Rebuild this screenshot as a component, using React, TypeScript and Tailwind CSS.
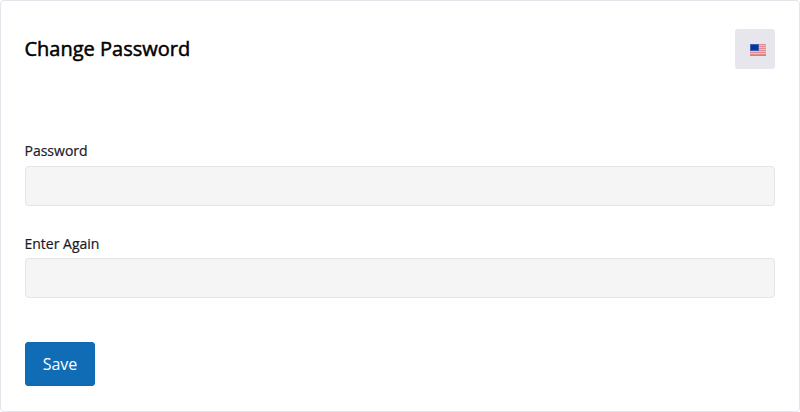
import { ButtonHTMLAttributes, InputHTMLAttributes } from 'react'

interface PasswordFieldProps extends InputHTMLAttributes<HTMLInputElement> {
  id: string
  label: string
}

const PasswordField = ({ id, label, ...props }: PasswordFieldProps) => (
  <div className="flex flex-col">
    <label htmlFor={id} className="-ml-[0.5px] pb-[4.6px] text-[14px] leading-[21px] text-[#1b1b28] [-webkit-text-stroke:0.22px_#1b1b28]">
      {label}
    </label>
    <input
      id={id}
      type="password"
      className="h-10 w-full rounded-[4px] border border-[#e4e4ea] bg-[#f5f5f5] px-3 text-sm outline-none"
      {...props}
    />
  </div>
)

const UsFlag = () => (
  <svg width="16" height="12" viewBox="0 0 16 12" shapeRendering="crispEdges">
    <rect width="16" height="12" fill="#f1bcbf" />
    {[0, 2, 4, 6, 8, 10].map((y) => (
      <rect key={y} y={y} width="16" height="1" fill="#e38b8f" />
    ))}
    <rect y="11" width="16" height="1" fill="#d87c80" />
    <rect width="9" height="7" fill="#3f60ae" />
    <rect x="1" y="1" width="7" height="5" fill="#0038a0" />
  </svg>
)

const LanguageButton = (props: ButtonHTMLAttributes<HTMLButtonElement>) => (
  <button
    type="button"
    className="flex size-10 items-center justify-center rounded-[3px] bg-[#e8e6ed] pt-0.5 pl-[6px]"
    {...props}
  >
    <UsFlag />
  </button>
)

export default function App() {
  return (
    <main className="h-[412px] w-full rounded-[4px] border border-[#e4e4ea] bg-white px-6 pt-7 font-['Open_Sans',sans-serif]">
      <header className="flex h-10 items-center justify-between">
        <h1 className="-ml-[0.5px] text-[20px] leading-[30px] text-black [-webkit-text-stroke:0.5px_#000]">Change Password</h1>
        <LanguageButton aria-label="Language" />
      </header>

      <form className="mt-[71.4px]" onSubmit={(e) => e.preventDefault()}>
        <div className="flex flex-col gap-[26.6px]">
          <PasswordField id="password" label="Password" />
          <PasswordField id="password-again" label="Enter Again" />
        </div>
        <button type="submit" className="mt-[43.8px] h-11 w-[70px] rounded-[3px] border border-[#0f68b1] bg-[#116cb6] text-base text-white">
          Save
        </button>
      </form>
    </main>
  )
}
